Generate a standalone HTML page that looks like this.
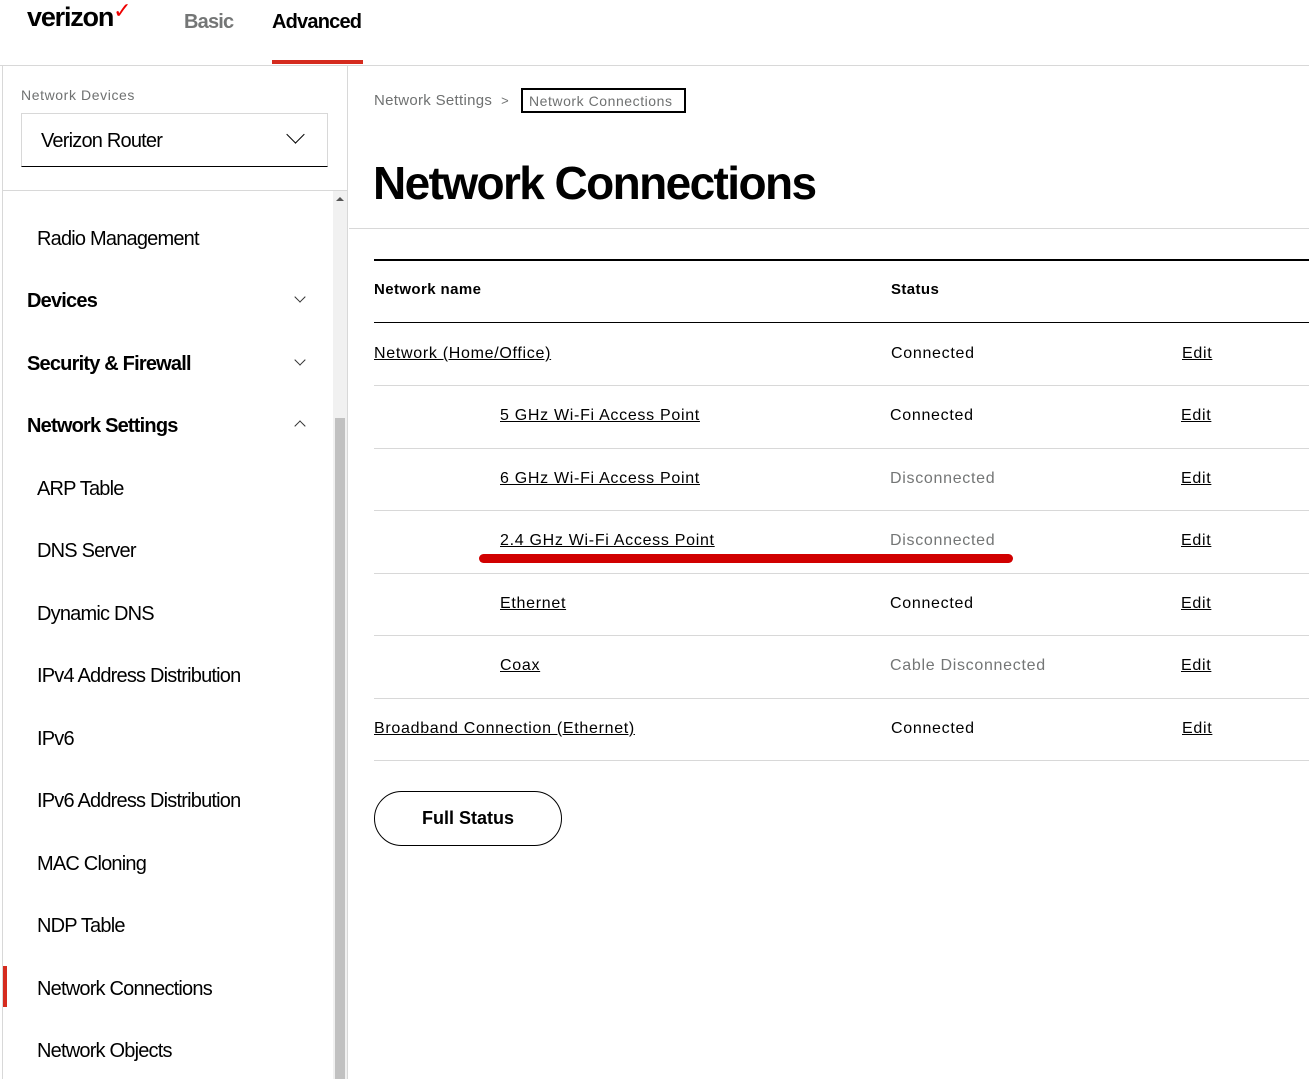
<!DOCTYPE html>
<html><head><meta charset="utf-8"><style>
*{margin:0;padding:0;box-sizing:border-box}
body{width:1309px;height:1079px;overflow:hidden;background:#fff;font-family:"Liberation Sans",sans-serif;color:#000;position:relative}
.abs{position:absolute;white-space:nowrap}
.logo{left:27px;top:2px;font-size:27px;font-weight:bold;letter-spacing:-1.2px}
.tab{top:11px;font-size:20px;font-weight:bold;letter-spacing:-0.8px}
.hdrline{left:0;top:65px;width:1309px;height:1px;background:#d8d8d8}
.side{left:2px;top:66px;width:346px;height:1013px;border-left:1px solid #d8d8d8;border-right:1px solid #d8d8d8}
.nav{font-size:20px;letter-spacing:-0.8px}
.navb{font-size:20px;font-weight:bold;letter-spacing:-0.8px}
.chev{position:absolute;left:296px;width:8px;height:8px;border-right:1.3px solid #333;border-bottom:1.3px solid #333}
.th{font-size:15px;font-weight:bold;letter-spacing:0.4px}
.td{font-size:16px;letter-spacing:0.7px}
.u{text-decoration:underline}
.g{color:#747676}
.rl{left:374px;width:935px;height:1px;background:#d8d8d8}
</style></head><body>
<div class="abs logo">verizon<span style="color:#e00;font-weight:normal;font-size:22px;position:relative;top:-8px">✓</span></div>
<div class="abs tab" style="left:184px;color:#747676">Basic</div>
<div class="abs tab" style="left:272px">Advanced</div>
<div class="abs" style="left:272px;top:60px;width:91px;height:4px;background:#d52b1e"></div>
<div class="abs hdrline"></div>
<div class="abs side"></div>
<div class="abs" style="left:21px;top:87px;font-size:14px;color:#6f7171;letter-spacing:0.6px">Network Devices</div>
<div class="abs" style="left:21px;top:113px;width:307px;height:54px;border:1px solid #d8d8d8;border-bottom:1px solid #000"></div>
<div class="abs" style="left:41px;top:130px;font-size:20px;letter-spacing:-0.8px">Verizon Router</div>
<div class="abs" style="left:289px;top:128px;width:13px;height:13px;border-right:1.8px solid #000;border-bottom:1.8px solid #000;transform:rotate(45deg)"></div>
<div class="abs" style="left:3px;top:190px;width:345px;height:1px;background:#d8d8d8"></div>
<div class="abs" style="left:333px;top:191px;width:14px;height:888px;background:#f1f1f1"></div>
<div class="abs" style="left:335px;top:418px;width:10px;height:661px;background:#c1c1c1"></div>
<div class="abs" style="left:336px;top:197px;width:0;height:0;border-left:4px solid transparent;border-right:4px solid transparent;border-bottom:4px solid #555"></div>
<div class="abs nav" style="left:37px;top:228px">Radio Management</div>
<div class="abs navb" style="left:27px;top:290px">Devices</div>
<div class="chev" style="top:293px;transform:rotate(45deg)"></div>
<div class="abs navb" style="left:27px;top:353px">Security &amp; Firewall</div>
<div class="chev" style="top:356px;transform:rotate(45deg)"></div>
<div class="abs navb" style="left:27px;top:415px">Network Settings</div>
<div class="chev" style="top:422px;transform:rotate(-135deg)"></div>
<div class="abs nav" style="left:37px;top:478px">ARP Table</div>
<div class="abs nav" style="left:37px;top:540px">DNS Server</div>
<div class="abs nav" style="left:37px;top:603px">Dynamic DNS</div>
<div class="abs nav" style="left:37px;top:665px">IPv4 Address Distribution</div>
<div class="abs nav" style="left:37px;top:728px">IPv6</div>
<div class="abs nav" style="left:37px;top:790px">IPv6 Address Distribution</div>
<div class="abs nav" style="left:37px;top:853px">MAC Cloning</div>
<div class="abs nav" style="left:37px;top:915px">NDP Table</div>
<div class="abs" style="left:3px;top:966px;width:4px;height:41px;background:#d52b1e"></div>
<div class="abs nav" style="left:37px;top:978px">Network Connections</div>
<div class="abs nav" style="left:37px;top:1040px">Network Objects</div>

<div class="abs" style="left:374px;top:92px;font-size:15px;color:#6f7171;letter-spacing:0.3px">Network Settings&nbsp;&nbsp;<span style="font-size:13px">&gt;</span></div>
<div class="abs" style="left:521px;top:88px;width:165px;height:25px;border:2px solid #000;font-size:14px;color:#6f7171;letter-spacing:0.55px;padding:3px 0 0 6px">Network Connections</div>
<div class="abs" style="left:373px;top:156px;font-size:46px;font-weight:bold;letter-spacing:-1.6px">Network Connections</div>
<div class="abs" style="left:349px;top:228px;width:960px;height:1px;background:#d8d8d8"></div>
<div class="abs" style="left:374px;top:259px;width:935px;height:2px;background:#000"></div>
<div class="abs th" style="left:374px;top:281px">Network name</div>
<div class="abs th" style="left:891px;top:281px">Status</div>
<div class="abs" style="left:374px;top:322px;width:935px;height:1px;background:#000"></div>

<div class="abs td u" style="left:374px;top:345px">Network (Home/Office)</div>
<div class="abs td" style="left:891px;top:345px">Connected</div>
<div class="abs td u" style="left:1182px;top:345px">Edit</div>
<div class="abs rl" style="top:385px"></div>
<div class="abs td u" style="left:500px;top:407px">5 GHz Wi-Fi Access Point</div>
<div class="abs td" style="left:890px;top:407px">Connected</div>
<div class="abs td u" style="left:1181px;top:407px">Edit</div>
<div class="abs rl" style="top:448px"></div>
<div class="abs td u" style="left:500px;top:470px">6 GHz Wi-Fi Access Point</div>
<div class="abs td g" style="left:890px;top:470px">Disconnected</div>
<div class="abs td u" style="left:1181px;top:470px">Edit</div>
<div class="abs rl" style="top:510px"></div>
<div class="abs td u" style="left:500px;top:532px">2.4 GHz Wi-Fi Access Point</div>
<div class="abs td g" style="left:890px;top:532px">Disconnected</div>
<div class="abs td u" style="left:1181px;top:532px">Edit</div>
<div class="abs" style="left:479px;top:554px;width:534px;height:9px;border-radius:5px;background:#d10000"></div>
<div class="abs rl" style="top:573px"></div>
<div class="abs td u" style="left:500px;top:595px">Ethernet</div>
<div class="abs td" style="left:890px;top:595px">Connected</div>
<div class="abs td u" style="left:1181px;top:595px">Edit</div>
<div class="abs rl" style="top:635px"></div>
<div class="abs td u" style="left:500px;top:657px">Coax</div>
<div class="abs td g" style="left:890px;top:657px">Cable Disconnected</div>
<div class="abs td u" style="left:1181px;top:657px">Edit</div>
<div class="abs rl" style="top:698px"></div>
<div class="abs td u" style="left:374px;top:720px">Broadband Connection (Ethernet)</div>
<div class="abs td" style="left:891px;top:720px">Connected</div>
<div class="abs td u" style="left:1182px;top:720px">Edit</div>
<div class="abs rl" style="top:760px"></div>
<div class="abs" style="left:374px;top:791px;width:188px;height:55px;border:1px solid #000;border-radius:28px;font-size:18px;font-weight:bold;text-align:center;line-height:53px">Full Status</div>
</body></html>
